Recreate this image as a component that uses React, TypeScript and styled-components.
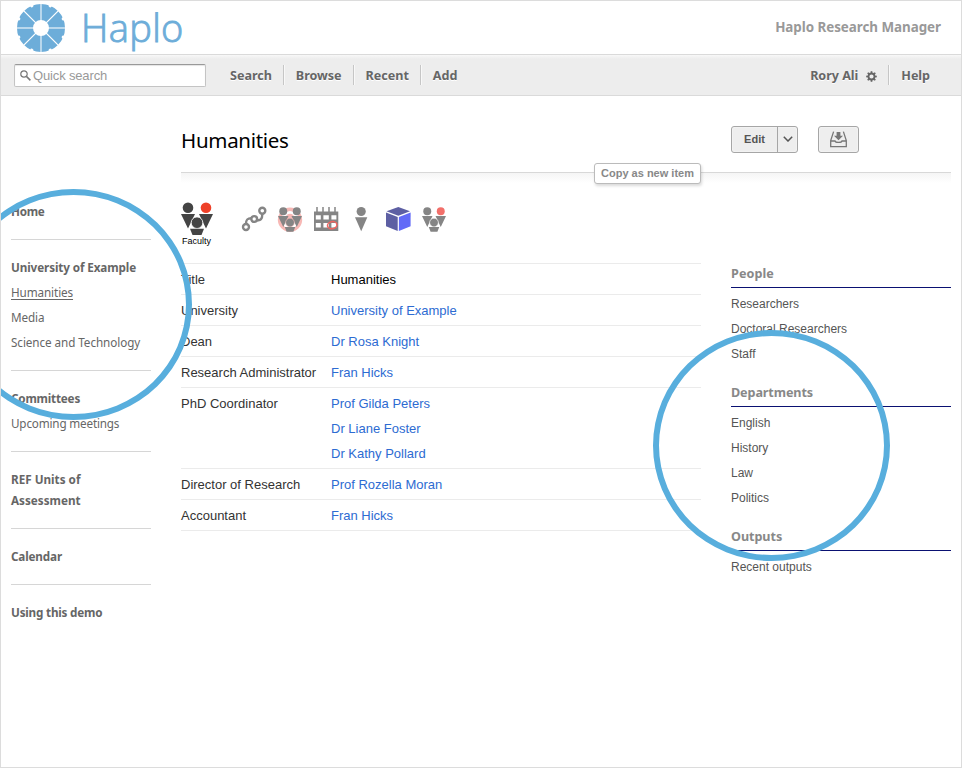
import React from "react";
import styled, { createGlobalStyle } from "styled-components";

const SANS = `"Liberation Sans", Arial, Helvetica, sans-serif`;
const HUMANIST = `"Noto Sans", "Open Sans", sans-serif`;

const GlobalStyle = createGlobalStyle`
  *, *::before, *::after { box-sizing: border-box; }
  body { margin: 0; background: #fff; font-family: ${SANS}; }
  svg { display: block; }
`;

const Page = styled.div`
  position: relative;
  width: 962px;
  height: 768px;
  overflow: hidden;
  border: 1px solid #dcdcdc;
  background: #fff;
`;

const Header = styled.header`
  display: flex;
  justify-content: space-between;
  height: 53px;
  padding: 0 20px 0 15px;
`;

const Brand = styled.div`
  display: flex;
  gap: 15px;
  padding-top: 2px;
`;

const BrandName = styled.span`
  font: 300 38px/49px "Open Sans", sans-serif;
  letter-spacing: 0.35px;
  color: #6dadd9;
  -webkit-text-stroke: 0.9px #6dadd9;
`;

const ProductName = styled.span`
  font: 700 13.4px/53px ${HUMANIST};
  letter-spacing: -0.04px;
  color: #999;
`;

const NavBar = styled.nav`
  display: flex;
  align-items: center;
  height: 42px;
  padding: 0 20px 0 13px;
  border-top: 1px solid #dadada;
  border-bottom: 1px solid #dadada;
  background: linear-gradient(#f8f8f8 0, #ededed 4px);
`;

const SearchBox = styled.div`
  display: flex;
  align-items: center;
  gap: 2px;
  width: 192px;
  height: 23px;
  padding-left: 5px;
  margin-right: 11px;
  border: 1px solid #c4c4c4;
  border-top-color: #999;
  border-radius: 2px;
  background: #fff;
  box-shadow: inset 0 1px 1px #e4e4e4;
  font-size: 13px;
  letter-spacing: -0.15px;
  color: #999;
`;

const NavItem = styled.a<{ $divided?: boolean }>`
  display: flex;
  align-items: center;
  gap: 8px;
  height: 20px;
  padding: 2px 11px 0 12px;
  border-left: 1px solid ${(p) => (p.$divided ? "#c6c6c6" : "transparent")};
  box-shadow: ${(p) => (p.$divided ? "inset 1px 0 #f8f8f8" : "none")};
  font: 700 12.6px/20px ${HUMANIST};
  letter-spacing: -0.04px;
  color: #666;
  text-shadow: 0 1px #fff;
`;

const NavEnd = styled.div`
  display: flex;
  margin-left: auto;
`;

const Body = styled.div`
  display: grid;
  grid-template-columns: 140px 770px;
  column-gap: 30px;
  padding-left: 10px;
`;

const Sidebar = styled.aside`
  padding-top: 88px;
`;

const SideGroup = styled.div`
  display: flex;
  flex-direction: column;
  gap: 4px;
  padding: 17px 0;
  & + & { border-top: 1px solid #d6d6d6; }
`;

const SideHeading = styled.a<{ $track?: number }>`
  font: 700 11.7px/21px ${HUMANIST};
  letter-spacing: ${(p) => p.$track ?? -0.15}px;
  color: #666;
`;

const SideLink = styled.a<{ $active?: boolean; $track?: number }>`
  font: 400 11.7px/21px ${HUMANIST};
  letter-spacing: ${(p) => p.$track ?? -0.1}px;
  color: #666;
  text-decoration: ${(p) => (p.$active ? "underline" : "none")};
  text-underline-offset: 2px;
`;

const TitleRow = styled.div`
  display: grid;
  grid-template-columns: 520px 220px;
  column-gap: 30px;
  height: 77px;
  border-bottom: 1px solid #d8d8d8;
`;

const Title = styled.h1`
  margin: 0;
  padding-top: 28px;
  font: 400 20.5px/32px ${HUMANIST};
  letter-spacing: -0.3px;
  color: #000;
`;

const Actions = styled.div`
  display: flex;
  gap: 20px;
  padding-top: 30px;
`;

const ButtonGroup = styled.div`
  display: flex;
  height: 27px;
  border: 1px solid #a6a6a6;
  border-radius: 3px;
  background: #eee;
  box-shadow: inset 0 0 2px #fff;
`;

const Button = styled.button<{ $width: number; $divided?: boolean }>`
  display: flex;
  align-items: center;
  justify-content: center;
  width: ${(p) => p.$width}px;
  padding: 0 0 1px;
  border: 0;
  border-left: ${(p) => (p.$divided ? "1px solid #a6a6a6" : "0")};
  background: none;
  font: 700 11px ${SANS};
  color: #555;
`;

const Fade = styled.div`
  height: 10px;
  background: linear-gradient(#f5f5f5, #fff);
`;

const Content = styled.div`
  display: grid;
  grid-template-columns: 520px 220px;
  column-gap: 30px;
`;

const IconRow = styled.div`
  display: flex;
  gap: 12px;
  height: 80px;
  padding-top: 19px;
`;

const TypeBadge = styled.div`
  display: flex;
  flex-direction: column;
  gap: 2px;
  width: 49px;
  font-size: 9px;
  line-height: 10px;
  color: #000;
  span { padding-left: 1px; }
`;

const SmallIcon = styled.div`
  width: 24px;
  padding-top: 5px;
  svg { overflow: visible; }
`;

const Fields = styled.dl`
  margin: 0;
  border-bottom: 1px solid #ebebeb;
`;

const Field = styled.div`
  display: grid;
  grid-template-columns: 150px 1fr;
  padding: 3px 0 2px;
  border-top: 1px solid #ebebeb;
  font-size: 13px;
  line-height: 25px;
`;

const FieldName = styled.dt`
  color: #333;
`;

const FieldValues = styled.dd<{ $plain?: boolean }>`
  display: flex;
  flex-direction: column;
  margin: 0;
  color: ${(p) => (p.$plain ? "#000" : "#2d6bd2")};
`;

const RightColumn = styled.aside`
  padding-top: 64px;
`;

const RightHeading = styled.h2<{ $track: number }>`
  height: 41px;
  margin: 0 0 4px;
  padding-top: 17px;
  border-bottom: 1px solid #0a1172;
  font: 700 12.6px/20px ${HUMANIST};
  letter-spacing: ${(p) => p.$track}px;
  color: #888;
`;

const RightSection = styled.section`
  & + & { margin-top: -1px; }
`;

const RightLink = styled.a`
  display: block;
  font-size: 12px;
  line-height: 25px;
  color: #555;
`;

const Tooltip = styled.div`
  position: absolute;
  left: 593px;
  top: 162px;
  width: 107px;
  height: 21px;
  border: 1px solid #bbb;
  border-radius: 3px;
  background: #fff;
  box-shadow: 1px 2px 3px rgba(0, 0, 0, 0.15);
  font: 700 11px/19px ${SANS};
  text-align: center;
  color: #888;
`;

const Highlight = styled.div<{ $left: number; $top: number }>`
  position: absolute;
  left: ${(p) => p.$left}px;
  top: ${(p) => p.$top}px;
  width: 237px;
  height: 231px;
  border: 6px solid #58aedd;
  border-radius: 50%;
  pointer-events: none;
`;

const ANGLES = [0, 45, 90, 135, 180, 225, 270, 315];

function Logo() {
  return (
    <svg width="50" height="50" viewBox="-25 -25 50 50">
      <circle r="16" fill="none" stroke="#6dadd9" strokeWidth="16" />
      {ANGLES.map((a) => (
        <g key={a} transform={`rotate(${a})`}>
          <path d="M0 -7V-25" stroke="#fff" strokeWidth={a % 90 ? 1.2 : 1.6} opacity={a % 90 ? 1 : 0.65} />
          <circle cy="-24.2" r="1.7" fill="#fff" transform="rotate(22.5)" />
        </g>
      ))}
    </svg>
  );
}

function Group({ size, body, accent, ring }: { size: number; body: string; accent: string; ring?: boolean }) {
  return (
    <svg width={size} height={size} viewBox="0 0 32 32" overflow="visible">
      {ring && <circle cx="16" cy="17" r="14" fill="none" stroke="#f7b8b5" strokeWidth="4.5" />}
      {ring && <circle cx="16" cy="15" r="6" fill="#f7b8b5" />}
      <g fill={body}>
        <circle cx="7" cy="5.7" r="5.3" />
        <circle cx="25" cy="5.7" r="5.3" fill={accent} />
        <path d="M0 12H14L7 26.5ZM18 12H32L25 26.5Z" />
        <circle cx="16" cy="20.7" r="5.8" stroke={ring ? "#f7b8b5" : "#fff"} strokeWidth="0.8" />
        <path d="M9 26.7H23L20.5 33H11.5Z" />
      </g>
    </svg>
  );
}

function Links() {
  return (
    <svg width="24" height="24" fill="none" stroke="#858585" strokeWidth="2.4">
      <circle cx="4" cy="20" r="3" />
      <circle cx="12.2" cy="12" r="2.9" />
      <circle cx="20.3" cy="3.8" r="3" />
      <path d="M4 17C4 13 5 11.2 9.3 11.2M15 13C18.6 13.8 20.3 12 20.3 7" />
    </svg>
  );
}

function CalendarIcon() {
  return (
    <svg width="25" height="24">
      <path d="M3 0V5M9 0V5M15 0V5M21 0V5" stroke="#858585" strokeWidth="1.5" />
      <path d="M0 4.5H24.3V24H0Z" fill="#858585" />
      <path d="M1.8 8.2h5v4.4h-5zM9.4 8.2h5.4v4.4H9.4zM17.4 8.2h5v4.4h-5zM1.8 16h5v4.6h-5zM9.4 16h5.4v4.6H9.4zM17.4 16h5v4.6h-5z" fill="#fff" />
      <ellipse cx="18.2" cy="18.2" rx="4.8" ry="3.5" fill="none" stroke="#f0655f" strokeWidth="1.5" transform="rotate(-12 18.2 18.2)" />
    </svg>
  );
}

function Person() {
  return (
    <svg width="24" height="24" fill="#858585">
      <circle cx="11.2" cy="4.5" r="4.6" />
      <path d="M5 10.3H17.3L11.2 24.2Z" />
    </svg>
  );
}

function Cube() {
  return (
    <svg width="25" height="24">
      <path d="M12.3 0 24 4.2 12.3 8.8 0.5 4.2Z" fill="#5d5fa3" />
      <path d="M0 5.5 11.7 10V24L0 19.2Z" fill="#5d5fa3" />
      <path d="M12.9 10 24.6 5.5V19.2L12.9 24Z" fill="#626af7" />
    </svg>
  );
}

function Magnifier() {
  return (
    <svg width="11" height="11" fill="none" stroke="#777">
      <circle cx="4" cy="4" r="3.2" strokeWidth="1.2" />
      <path d="M6.4 6.4 10.4 10.4" strokeWidth="1.5" />
    </svg>
  );
}

function Gear() {
  return (
    <svg width="11" height="11" viewBox="-5.5 -5.5 11 11" stroke="#666" fill="none">
      <circle r="3" strokeWidth="1.8" />
      {ANGLES.map((a) => (
        <path key={a} d="M0 -3.4V-5.3" strokeWidth="1.7" transform={`rotate(${a})`} />
      ))}
    </svg>
  );
}

function Chevron() {
  return (
    <svg width="10" height="6" fill="none" stroke="#555" strokeWidth="1.5">
      <path d="M0.8 0.7 5 5 9.2 0.7" />
    </svg>
  );
}

function Tray() {
  return (
    <svg width="17" height="17" fill="none" stroke="#777" strokeWidth="1.3">
      <path d="M3.6 0.6 0.7 9.5V15.6H16.3V9.5L13.4 0.6M0.8 10H5C5.5 11.9 11.5 11.9 12 10H16.2" />
      <path d="M6.6 1H10.4V4.7H13L8.5 9.2 4 4.7H6.6Z" fill="#777" stroke="none" />
    </svg>
  );
}

const FIELDS: { name: string; values: string[]; plain?: boolean }[] = [
  { name: "Title", values: ["Humanities"], plain: true },
  { name: "University", values: ["University of Example"] },
  { name: "Dean", values: ["Dr Rosa Knight"] },
  { name: "Research Administrator", values: ["Fran Hicks"] },
  { name: "PhD Coordinator", values: ["Prof Gilda Peters", "Dr Liane Foster", "Dr Kathy Pollard"] },
  { name: "Director of Research", values: ["Prof Rozella Moran"] },
  { name: "Accountant", values: ["Fran Hicks"] },
];

const SECTIONS = [
  { title: "People", track: 0.09, links: ["Researchers", "Doctoral Researchers", "Staff"] },
  { title: "Departments", track: -0.1, links: ["English", "History", "Law", "Politics"] },
  { title: "Outputs", track: -0.05, links: ["Recent outputs"] },
];

export default function App() {
  return (
    <Page>
      <GlobalStyle />
      <Header>
        <Brand>
          <Logo />
          <BrandName>Haplo</BrandName>
        </Brand>
        <ProductName>Haplo Research Manager</ProductName>
      </Header>
      <NavBar>
        <SearchBox>
          <Magnifier />
          Quick search
        </SearchBox>
        <NavItem>Search</NavItem>
        <NavItem $divided>Browse</NavItem>
        <NavItem $divided>Recent</NavItem>
        <NavItem $divided>Add</NavItem>
        <NavEnd>
          <NavItem>
            Rory Ali
            <Gear />
          </NavItem>
          <NavItem $divided>Help</NavItem>
        </NavEnd>
      </NavBar>
      <Body>
        <Sidebar>
          <SideGroup>
            <SideHeading $track={-0.3}>Home</SideHeading>
          </SideGroup>
          <SideGroup>
            <SideHeading $track={-0.11}>University of Example</SideHeading>
            <SideLink $active>Humanities</SideLink>
            <SideLink>Media</SideLink>
            <SideLink $track={-0.07}>Science and Technology</SideLink>
          </SideGroup>
          <SideGroup>
            <SideHeading $track={-0.2}>Committees</SideHeading>
            <SideLink $track={-0.17}>Upcoming meetings</SideLink>
          </SideGroup>
          <SideGroup>
            <SideHeading $track={0}>
              REF Units of
              <br />
              Assessment
            </SideHeading>
          </SideGroup>
          <SideGroup>
            <SideHeading>Calendar</SideHeading>
          </SideGroup>
          <SideGroup>
            <SideHeading $track={-0.2}>Using this demo</SideHeading>
          </SideGroup>
        </Sidebar>
        <main>
          <TitleRow>
            <Title>Humanities</Title>
            <Actions>
              <ButtonGroup>
                <Button $width={45}>Edit</Button>
                <Button $width={20} $divided aria-label="More">
                  <Chevron />
                </Button>
              </ButtonGroup>
              <ButtonGroup>
                <Button $width={39} aria-label="Save to tray">
                  <Tray />
                </Button>
              </ButtonGroup>
            </Actions>
          </TitleRow>
          <Fade />
          <Content>
            <div>
              <IconRow>
                <TypeBadge>
                  <Group size={32} body="#444" accent="#ee4028" />
                  <span>Faculty</span>
                </TypeBadge>
                <SmallIcon><Links /></SmallIcon>
                <SmallIcon><Group size={24} body="#858585" accent="#858585" ring /></SmallIcon>
                <SmallIcon><CalendarIcon /></SmallIcon>
                <SmallIcon><Person /></SmallIcon>
                <SmallIcon><Cube /></SmallIcon>
                <SmallIcon><Group size={24} body="#858585" accent="#f26f6a" /></SmallIcon>
              </IconRow>
              <Fields>
                {FIELDS.map((f) => (
                  <Field key={f.name}>
                    <FieldName>{f.name}</FieldName>
                    <FieldValues $plain={f.plain}>
                      {f.values.map((v) => (
                        <span key={v}>{v}</span>
                      ))}
                    </FieldValues>
                  </Field>
                ))}
              </Fields>
            </div>
            <RightColumn>
              {SECTIONS.map((s) => (
                <RightSection key={s.title}>
                  <RightHeading $track={s.track}>{s.title}</RightHeading>
                  {s.links.map((l) => (
                    <RightLink key={l}>{l}</RightLink>
                  ))}
                </RightSection>
              ))}
            </RightColumn>
          </Content>
        </main>
      </Body>
      <Tooltip>Copy as new item</Tooltip>
      <Highlight $left={-46} $top={188} />
      <Highlight $left={652} $top={329} />
    </Page>
  );
}
